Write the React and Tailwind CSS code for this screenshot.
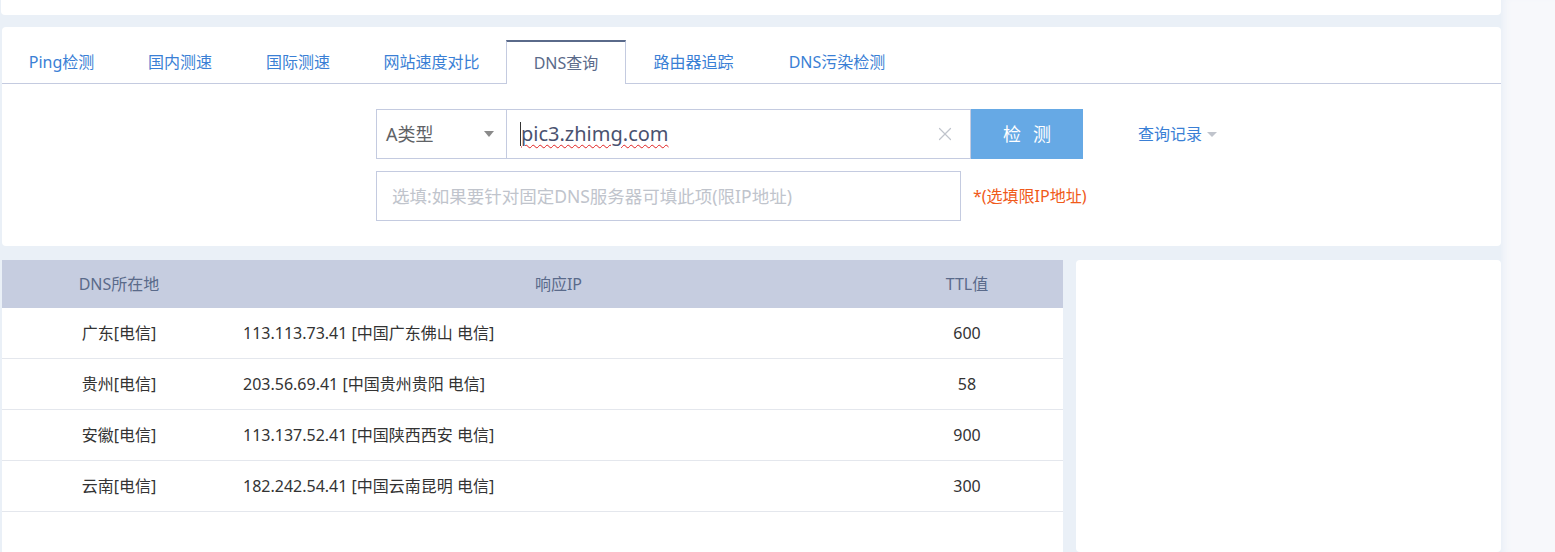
import { X } from "lucide-react";

const TABS = [
  { label: "Ping检测", w: "w-[119px]" },
  { label: "国内测速", w: "w-[118px]" },
  { label: "国际测速", w: "w-[118px]" },
  { label: "网站速度对比", w: "w-[149px]" },
  { label: "DNS查询", w: "w-[120px]" },
  { label: "路由器追踪", w: "w-[135px]" },
  { label: "DNS污染检测", w: "w-[152px]" },
];

const ROWS = [
  { loc: "广东[电信]", ip: "113.113.73.41 [中国广东佛山 电信]", ttl: "600" },
  { loc: "贵州[电信]", ip: "203.56.69.41 [中国贵州贵阳 电信]", ttl: "58" },
  { loc: "安徽[电信]", ip: "113.137.52.41 [中国陕西西安 电信]", ttl: "900" },
  { loc: "云南[电信]", ip: "182.242.54.41 [中国云南昆明 电信]", ttl: "300" },
];

const font = { fontFamily: '"Noto Sans", "Noto Sans CJK SC", sans-serif' };

export default function App() {
  return (
    <div className="flex h-[552px] w-[1555px] overflow-hidden" style={font}>
      <div className="w-[1501px] shrink-0 bg-[#eaf0f7] flex flex-col">
        {/* top card remnant */}
        <div className="h-[15px] ml-[1px] bg-white rounded-b-[4px]" />

        {/* tool card */}
        <div className="mt-[12px] ml-[2px] h-[219px] bg-white rounded-[4px] pt-[13px]">
          <div className="flex h-[44px] border-b border-[#c4cbe0] items-stretch">
            {TABS.map((t) => {
              const active = t.label === "DNS查询";
              return (
                <div
                  key={t.label}
                  className={`${t.w} shrink-0 flex items-center justify-center text-[16px] leading-none ${
                    active
                      ? "border-t-2 border-t-[#5a6a8a] border-x border-x-[#c4cbe0] bg-white text-[#5a6a8a] -mb-px"
                      : "text-[#3a7fd5]"
                  }`}
                >
                  {t.label}
                </div>
              );
            })}
          </div>

          <div className="mt-[25px] flex flex-col items-start pl-[374px]">
            <div className="flex items-center h-[50px]">
              <div className="w-[131px] h-full border border-[#c4cbe0] flex items-center justify-between px-[9px] text-[18px] text-[#606266]">
                <span>A类型</span>
                <span className="w-0 h-0 border-x-[5px] border-x-transparent border-t-[6px] border-t-[#8a8a8a] mr-[3px]" />
              </div>
              <div className="w-[464px] h-full border border-l-0 border-[#c4cbe0] flex items-center pl-[13px] pr-[14px]">
                <span className="w-px h-[24px] bg-[#333]" />
                <span className="text-[20px] text-[#4a5270] underline decoration-wavy decoration-[#e02020] decoration-1 underline-offset-[3px]">
                  pic3.zhimg.com
                </span>
                <X className="ml-auto text-[#c0c4cc]" size={22} strokeWidth={1.3} />
              </div>
              <div className="w-[112px] h-full bg-[#66a9e5] text-white text-[18px] flex items-center justify-center tracking-[12px] pl-[12px]">
                检测
              </div>
              <div className="ml-[55px] flex items-center text-[16px] text-[#3a7fd5]">
                查询记录
                <span className="ml-[5px] w-0 h-0 border-x-[5px] border-x-transparent border-t-[5px] border-t-[#c0c4cc]" />
              </div>
            </div>
            <div className="mt-[12px] flex items-center">
              <div className="w-[585px] h-[50px] border border-[#c4cbe0] flex items-center px-[15px] text-[17.5px] text-[#c0c4cc]">
                选填:如果要针对固定DNS服务器可填此项(限IP地址)
              </div>
              <span className="ml-[12px] text-[16px] text-[#f05a1a]">*(选填限IP地址)</span>
            </div>
          </div>
        </div>

        {/* results */}
        <div className="mt-[14px] ml-[2px] flex gap-[13px] flex-1">
          <div className="w-[1061px] bg-white">
            <div className="grid grid-cols-[234px_1fr_192px] h-[48px] bg-[#c6cde0] text-[16px] text-[#5a6a8a] items-center">
              <div className="text-center">DNS所在地</div>
              <div className="text-center pl-[10px]">响应IP</div>
              <div className="text-center">TTL值</div>
            </div>
            {ROWS.map((r) => (
              <div
                key={r.loc}
                className="grid grid-cols-[234px_1fr_192px] h-[51px] border-b border-[#e4e7ed] text-[16px] text-[#333] items-center"
              >
                <div className="text-center">{r.loc}</div>
                <div className="pl-[7px]">{r.ip}</div>
                <div className="text-center">{r.ttl}</div>
              </div>
            ))}
          </div>
          <div className="w-[425px] bg-white rounded-[4px]" />
        </div>
      </div>
      <div className="flex-1 bg-[#f7f8fb] shadow-[inset_8px_0_8px_-6px_#e6edf6]" />
    </div>
  );
}
